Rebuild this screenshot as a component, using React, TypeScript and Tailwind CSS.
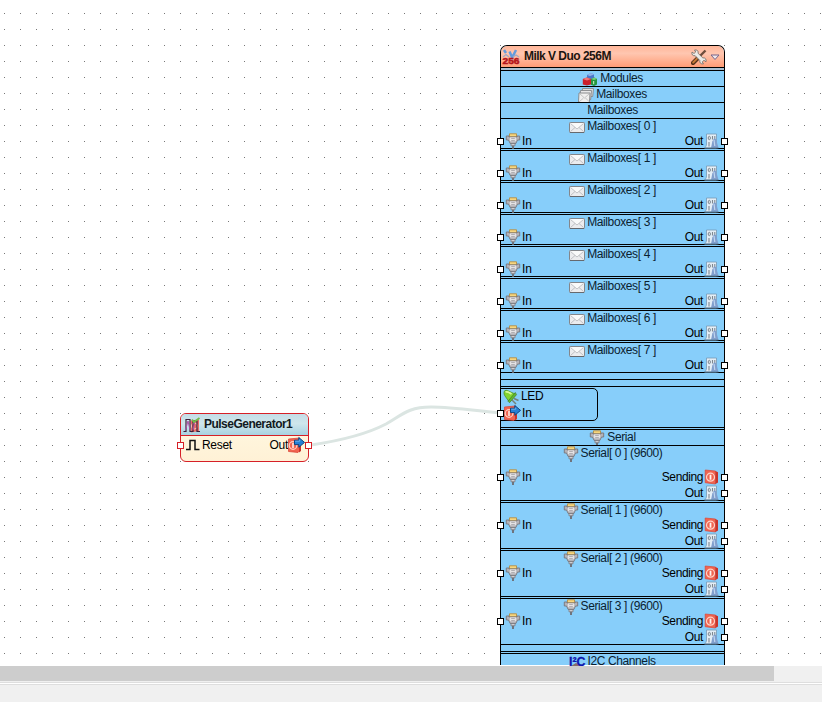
import React from "react";

type Kids = { children?: React.ReactNode };

const Connector = () => (
  <svg className="h-4 w-4 shrink-0" viewBox="0 0 16 16">
    <path d="M4.500 .8h7v3h-7z" fill="#f7d67f" stroke="#b58d42" strokeWidth=".9" />
    <path d="M1.300 3h2.700v1h8V3h2.700v4h-2.200l-1.700 3.500H5.200L3.500 7H1.300z" fill="#b4b3b8" stroke="#77757a" strokeWidth=".9" />
    <path d="M4.800 4.300h6.400v4H4.800z" fill="#e4e2e4" />
    <path d="M6.200 5.500h3.600M6.200 7.500h3.600" stroke="#a3a1a5" strokeWidth=".8" />
    <path d="M6 10.500h4v2.300H6z" fill="#cfcdd1" stroke="#7a787d" strokeWidth=".8" />
    <path d="M8 12.800V16" stroke="#6d6b70" strokeWidth="1.800" />
  </svg>
);

const Envelope = () => (
  <svg className="h-4 w-4 shrink-0" viewBox="0 0 16 16">
    <rect x=".5" y="3.500" width="15" height="10" rx=".8" fill="#ececee" stroke="#83868b" />
    <path d="M1 4h14l-7 6z" fill="#fafafa" />
    <path d="M1.500 12.500l4.500-4M14.500 12.500l-4.500-4M1.500 4.500L8 10l6.500-5.500" stroke="#b4b5b9" fill="none" strokeWidth=".8" />
    <path d="M1 13.500h14" stroke="#66696e" />
  </svg>
);

const Envelopes = () => (
  <svg className="h-4 w-4 shrink-0 overflow-visible" viewBox="0 0 16 16">
    <path d="M4.500 1.500h11l-.8 8h-11z" fill="#dcdddd" stroke="#87898b" strokeWidth=".9" />
    <path d="M2.500 3.500h11l-.8 9h-11z" fill="#e8e8e8" stroke="#87898b" strokeWidth=".9" />
    <path d="M1 6h11l-.5 9.500H.5z" fill="#f0f0ef" stroke="#7f8183" strokeWidth=".9" />
    <path d="M1 15l4.500-4M11.500 15L7.500 11M1.500 6.500L6.500 11l5-4.500" stroke="#b5b6b6" fill="none" strokeWidth=".8" />
  </svg>
);

const Binary = () => (
  <svg className="h-4 w-4 shrink-0" viewBox="0 0 16 16">
    <path d="M2.500 1h10v14h-12c1-1 2-2 2-4z" fill="#e4eef6" stroke="#7799b5" strokeWidth=".8" />
    <ellipse cx="5.300" cy="5" rx="1.100" ry="1.700" fill="none" stroke="#7e8890" />
    <path d="M8.500 3v3.500M5 9v4.500M10.800 3v3" stroke="#7e8890" strokeWidth="1.100" />
    <path d="M7 15l1.300-6.500L10 5.500l2 .5 2.500 9z" fill="#819fcd" />
    <path d="M10 7l.8 6" stroke="#c1d5ee" strokeWidth="1.200" />
    <path d="M.5 15h14" stroke="#577f9d" strokeWidth=".9" />
  </svg>
);

const Power = () => (
  <svg className="h-4 w-4 shrink-0" viewBox="0 0 16 16">
    <path d="M1.200 1l10.300 1v13l-10.300-1.300z" fill="#f06450" stroke="#dd4635" strokeWidth=".7" />
    <path d="M11.500 2L14 3.200v10.300L11.500 15z" fill="#c8342a" />
    <circle cx="6.500" cy="8.200" r="4" fill="none" stroke="#ffd3c8" strokeWidth="1.200" />
    <path d="M6.500 5.700v5" stroke="#fff3ee" strokeWidth="1.800" />
  </svg>
);

const PowerArrow = () => (
  <svg className="h-4 w-4 shrink-0 overflow-visible" viewBox="0 0 16 16">
    <path d="M.5 2l11-1v13L10 15.500.5 14.500z" fill="#f16450" stroke="#d83f31" strokeWidth=".7" />
    <path d="M11 9h2v5l-2 1.500z" fill="#c8342a" />
    <circle cx="5" cy="8.500" r="3.800" fill="none" stroke="#ffd0c3" strokeWidth="1.200" />
    <path d="M5 6v5" stroke="#fff0ea" strokeWidth="1.500" />
    <path d="M6.500 3.200h4.300V.5l5.700 4.900-5.700 4.900V7.600H6.500z" fill="#2480d6" stroke="#0d427f" />
    <path d="M7.200 4.200h4.500V2.500" stroke="#6fb6ef" fill="none" strokeWidth=".9" />
  </svg>
);

const Cubes = () => (
  <svg className="h-4 w-4 shrink-0" viewBox="0 0 16 16">
    <path d="M5 4l4-2 3 1.500v6H5z" fill="#4a77cb" />
    <path d="M5 4l4-2 3 1.500-4 1.500z" fill="#93b4e9" />
    <path d="M.8 8l4-1.500L9 8v5.500l-4 1-4.200-1z" fill="#cb1f2b" />
    <path d="M.8 8l4-1.500L9 8l-4 1.500z" fill="#f07676" />
    <path d="M9 8l3.500-1.500L15 8v5.500L12 15l-3-1.200z" fill="#23953d" />
    <path d="M9 8l3.500-1.500L15 8l-3 1z" fill="#79d07b" />
    <path d="M11.700 10v3.200" stroke="#d3f4cf" />
  </svg>
);

const Led = () => (
  <svg className="h-4 w-4 shrink-0" viewBox="0 0 16 16">
    <path d="M9 11l4 4M11 9.500l4.500 2" stroke="#758078" strokeWidth="1.500" />
    <path d="M1 3.500C1 1.500 2.500 1 4.500 1.500L12 5 5.500 12 1.700 6.500C1 5.500 1 4.500 1 3.500z" fill="#82d631" stroke="#4b932b" strokeWidth=".8" />
    <path d="M2.500 3c2-.8 3.500.2 6 2" stroke="#dbfb99" strokeWidth="1.800" fill="none" />
    <path d="M12.300 3.500l1.200 2.200-7 8-1.500-1.500z" fill="#64b833" stroke="#417f25" strokeWidth=".7" />
  </svg>
);

const Tools = () => (
  <svg className="h-4 w-4 shrink-0" viewBox="0 0 16 16">
    <path d="M14.500 1.500L8 8" stroke="#6f4d3b" strokeWidth="2.400" />
    <path d="M7 9l-5 5" stroke="#55311b" strokeWidth="4.200" strokeLinecap="round" />
    <path d="M6.500 9.200l-4.300 4.300" stroke="#c87a36" strokeWidth="1.900" strokeLinecap="round" />
    <path d="M1 3l2 1.500L4.700 3 3.500 1c2.500-.5 4.200 1 3.600 3.300l4.700 4.600c2.300-.5 3.900 1.400 3.200 3.900l-2-1.500-1.800 1.600 1.300 2c-2.600.5-4.200-1.200-3.700-3.500L4.200 6.700C2.100 7.200.3 5.700 1 3z" fill="#ecebe8" stroke="#6f6963" strokeWidth=".8" />
  </svg>
);

const BoardLogo = () => (
  <svg className="h-4 w-4 shrink-0 overflow-visible" viewBox="0 0 16 16">
    <path d="M1 1l2 3M6.500 2.500l2.700 6L13 1" stroke="#639bdd" strokeWidth="2.500" fill="none" />
    <path d="M0 8l3-2.500L6 8M10 8l3-2 3 2" stroke="#a0a9c4" strokeWidth="1.300" fill="none" />
    <text x="-.5" y="15.300" textLength="17" lengthAdjust="spacingAndGlyphs" fontFamily="Liberation Sans, Arial, sans-serif" fontSize="9" fontWeight="700" fill="#b3141b" stroke="#b3141b" strokeWidth=".5">256</text>
  </svg>
);

const PulseLogo = () => (
  <svg className="h-4 w-4 shrink-0 overflow-visible" viewBox="0 0 16 16">
    <path d="M6.500 3.500l8.500-1V14l-8 1.500z" fill="#e86b66" />
    <circle cx="10.500" cy="9" r="3" fill="none" stroke="#fac8c0" />
    <path d="M-.5 14.500H2V2.500h4v12h3V4h4v10.500h3" stroke="#3f2038" strokeWidth="1.200" fill="none" />
    <path d="M1.500 13L4 4l2 9M9 13l2-9" stroke="#ab50a8" fill="none" />
    <path d="M8 2.500L10 5l5.500-4" stroke="#70bd4a" strokeWidth="1.800" fill="none" />
  </svg>
);

const I2C = () => (
  <svg className="h-4 w-4 shrink-0 overflow-visible" viewBox="0 0 16 16">
    <path d="M2 12l5-3 6 3-5 4z" fill="#866b68" />
    <text x="0" y="12" textLength="16.500" lengthAdjust="spacingAndGlyphs" fontFamily="Liberation Sans, Arial, sans-serif" fontSize="13" fontWeight="700" fill="#0d16ae" stroke="#0d16ae" strokeWidth=".3">I²C</text>
  </svg>
);

const Pin = ({ right, red }: { right?: boolean; red?: boolean }) => (
  <span className={`absolute top-[5px] h-[7px] w-[7px] border bg-white ${right ? "-right-[4px]" : "-left-[4px]"} ${red ? "border-[#d62027]" : "border-black"}`} />
);

const Rule = () => <div className="h-px shrink-0 bg-black" />;
const DoubleRule = () => <div className="h-[3px] shrink-0 border-y border-black" />;

const Title = ({ icon, children }: Kids & { icon?: React.ReactNode }) => (
  <div className="flex h-[15px] shrink-0 items-center justify-center gap-[2px] text-[#0b2230]">
    {icon}
    <span className="tracking-[-0.38px]">{children}</span>
  </div>
);

const InLabel = ({ icon }: { icon: React.ReactNode }) => (
  <div className="flex items-center gap-px pl-1">
    <Pin />
    {icon}
    <span>In</span>
  </div>
);

const OutLabel = ({ children, icon }: Kids & { icon: React.ReactNode }) => (
  <div className="ml-auto flex items-center gap-px pr-1">
    <span className="tracking-[-0.4px]">{children}</span>
    {icon}
    <Pin right />
  </div>
);

const Mailbox = ({ index }: { index: number }) => (
  <div className="flex h-[29px] shrink-0 flex-col">
    <Title icon={<Envelope />}>Mailboxes[ {index} ]</Title>
    <div className="relative -mt-px flex h-4 shrink-0 items-center">
      <InLabel icon={<Connector />} />
      <OutLabel icon={<Binary />}>Out</OutLabel>
    </div>
  </div>
);

const Serial = ({ index }: { index: number }) => (
  <div className={`flex shrink-0 flex-col ${index === 0 ? "h-[54px]" : "h-[45px]"}`}>
    <Title icon={<Connector />}>Serial[ {index} ] (9600)</Title>
    <div className={`relative flex h-4 shrink-0 items-center ${index === 0 ? "mt-2" : "-mt-px"}`}>
      <InLabel icon={<Connector />} />
      <OutLabel icon={<Power />}>Sending</OutLabel>
    </div>
    <div className="relative flex h-4 shrink-0 items-center">
      <OutLabel icon={<Binary />}>Out</OutLabel>
    </div>
  </div>
);

const Board = () => (
  <section className="absolute left-[500px] top-[45px] h-[620px] w-[225px]">
    <div className="flex h-full flex-col rounded-t-[7px] border-x border-t border-black bg-[#87cefa]">
      <header className="flex h-[21px] shrink-0 items-center rounded-t-[6px] bg-linear-to-b from-[#ffb699] via-[#ffc6b0] via-35% to-[#ff9c75] pl-[2px] pr-1">
        <BoardLogo />
        <span className="ml-[5px] w-[90px] whitespace-nowrap font-bold tracking-[-0.52px] text-[#1c1410]">Milk V Duo 256M</span>
        <span className="ml-auto flex items-center gap-[3px]">
          <Tools />
          <svg className="h-[10px] w-[10px]" viewBox="0 0 10 10">
            <path d="M1 3h8L5 7.500z" fill="#eee8ec" stroke="#77658a" />
          </svg>
        </span>
      </header>
      <Rule />
      <div className="h-[2px] shrink-0 bg-[#a8bfd0]" />
      <Rule />
      <Title icon={<Cubes />}>Modules</Title>
      <Rule />
      <Title icon={<Envelopes />}>Mailboxes</Title>
      <Rule />
      <Title>Mailboxes</Title>
      <Rule />
      {[0, 1, 2, 3, 4, 5, 6, 7].map((n) => (
        <React.Fragment key={n}>
          {n > 0 && <DoubleRule />}
          <Mailbox index={n} />
        </React.Fragment>
      ))}
      <Rule />
      <div className="h-1.5 shrink-0" />
      <Rule />
      <div className="h-1.5 shrink-0" />
      <Rule />
      <div className="h-10 shrink-0 pt-px">
        <div className="-ml-px flex h-[33px] w-[98px] flex-col rounded-r-[5px] border border-black">
          <div className="flex h-[15px] items-center gap-px pl-[2px]">
            <Led />
            <span className="pl-px tracking-[-0.3px]">LED</span>
          </div>
          <div className="relative flex h-4 shrink-0 items-center pl-[3px] mt-px">
            <Pin />
            <PowerArrow />
            <span className="ml-[2px]">In</span>
          </div>
        </div>
      </div>
      <DoubleRule />
      <Title icon={<Connector />}>Serial</Title>
      <Rule />
      {[0, 1, 2, 3].map((n) => (
        <React.Fragment key={n}>
          {n > 0 && <DoubleRule />}
          <Serial index={n} />
        </React.Fragment>
      ))}
      <Rule />
      <div className="h-1.5 shrink-0" />
      <DoubleRule />
      <div className="h-[11px]">
        <Title icon={<I2C />}>I2C Channels</Title>
      </div>
    </div>
  </section>
);

const Generator = () => (
  <section className="absolute left-[180px] top-[413px] flex h-[49px] w-[129px] flex-col rounded-[6px] border border-[#d62027] bg-linear-to-b from-[#fff9e2] to-[#fff1d6]">
    <header className="flex h-[22px] shrink-0 items-center gap-1 rounded-t-[5px] border-b border-[#d62027] bg-linear-to-b from-[#c3dde7] via-[#cfe6ec] via-45% to-[#a8d2e1] pl-[3px]">
      <PulseLogo />
      <span className="font-bold tracking-[-0.52px] text-[#111a1e]">PulseGenerator1</span>
    </header>
    <div className="relative mt-px flex h-4 items-center pl-1 pr-[4px]">
      <Pin red />
      <svg className="h-4 w-4" viewBox="0 0 16 16">
        <path d="M1 12.500h4v-9h5v9h4.500" fill="none" stroke="#111" strokeWidth="1.500" />
      </svg>
      <span className="ml-px tracking-[-0.3px]">Reset</span>
      <span className="ml-auto tracking-[-0.3px]">Out</span>
      <PowerArrow />
      <Pin right red />
    </div>
  </section>
);

export default function App() {
  return (
    <main className="flex h-[702px] w-[822px] flex-col overflow-hidden bg-[#f0f0f0] font-['Liberation_Sans',Arial,sans-serif] text-[12px] leading-[15px] text-black">
      <div className="relative h-[666px] shrink-0 overflow-hidden bg-white">
        <svg className="absolute inset-0 h-full w-full">
          <defs>
            <pattern id="grid" x="4" y="13" width="16" height="16" patternUnits="userSpaceOnUse">
              <rect width="1" height="1" fill="#777" />
            </pattern>
          </defs>
          <rect width="822" height="666" fill="url(#grid)" />
          <path d="M311 445C338 441 365 435 386 424C402 415 408 407 431 407C454 407 477 411 500 413" fill="none" stroke="#dbe5e2" strokeWidth="3" />
        </svg>
        <Generator />
        <Board />
      </div>
      <div className="h-4 shrink-0 bg-[#f0f0f0]">
        <div className="h-[15px] w-[774px] bg-[#cdcdcd]" />
      </div>
      <div className="h-px shrink-0 bg-[#dedede]" />
      <div className="h-px shrink-0 bg-white" />
      <div className="h-px shrink-0 bg-[#dedede]" />
    </main>
  );
}
